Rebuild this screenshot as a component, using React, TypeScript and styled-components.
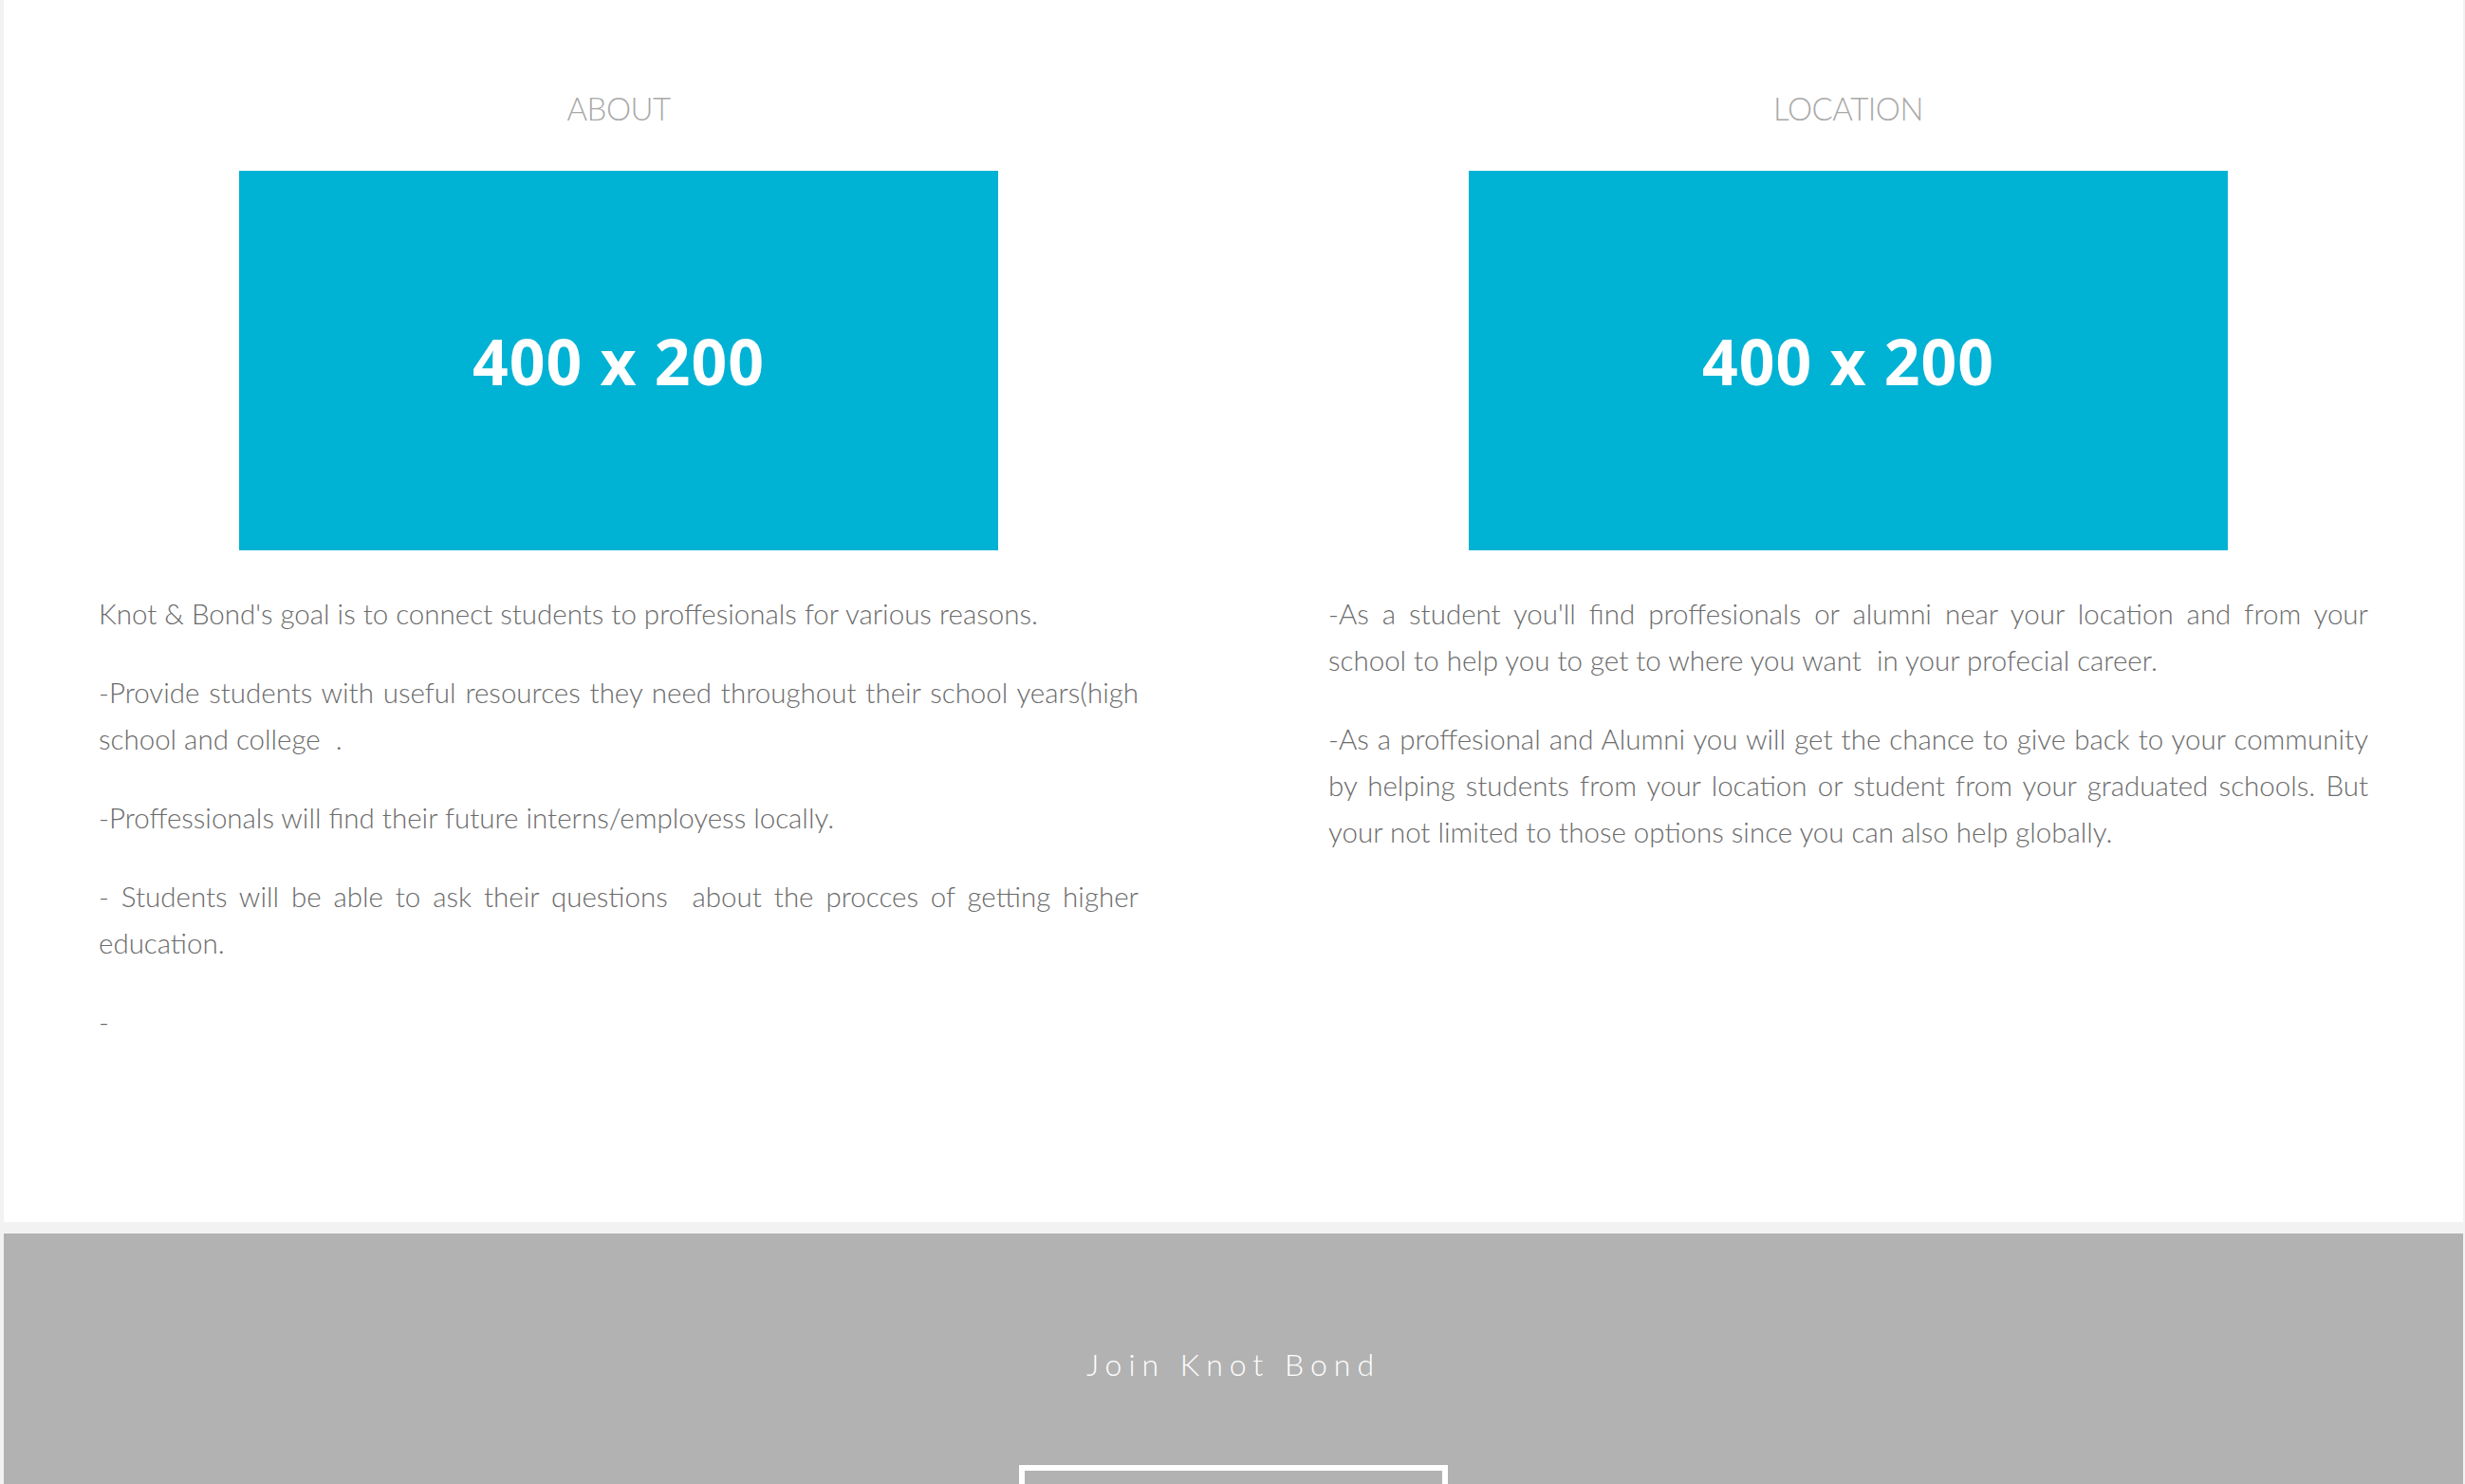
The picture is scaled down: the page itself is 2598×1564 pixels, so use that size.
import styled, { createGlobalStyle } from 'styled-components';

const GlobalStyle = createGlobalStyle`
  html, body {
    margin: 0;
    padding: 0;
    background-color: #f2f2f2; /* page shows through at the edges */
  }
  body {
    font-family: Lato, "Open Sans", "Liberation Sans", sans-serif;
  }
`;

const Page = styled.div`
  display: flex;
  flex-direction: column;
  gap: 12px;
  padding: 0 2px 0 4px;
`;

const InfoSection = styled.section`
  background-color: #ffffff;
  display: grid;
  grid-template-columns: 1fr 1fr;
  padding: 96px 0 153px;
`;

const Column = styled.div`
  display: flex;
  flex-direction: column;
  padding: 0 100px;
`;

const Heading = styled.h2`
  margin: 0 0 48px;
  font-size: 33px;
  line-height: 36px;
  font-weight: 300;
  letter-spacing: -0.5px;
  color: #a9a9a9;
  text-align: center;
`;

const Placeholder = styled.div`
  align-self: center;
  width: 800px;
  height: 400px;
  margin-bottom: 42px;
  background-color: #00b2d4;
  display: flex;
  align-items: center;
  justify-content: center;
  color: #ffffff;
  font-family: "Open Sans", Lato, sans-serif;
  font-weight: 700;
  font-size: 66px;
  letter-spacing: 1px;
`;

const Paragraph = styled.p`
  margin: 0 0 34px;
  font-size: 29.5px;
  line-height: 49px;
  font-weight: 300;
  color: #6b6b6b;
  text-align: justify;
  white-space: pre-wrap;
`;

const Footer = styled.footer`
  background-color: #b2b2b2;
  display: flex;
  flex-direction: column;
  align-items: center;
  padding: 122px 0 120px;
`;

const FooterTitle = styled.h3`
  margin: 0 0 90px;
  font-size: 32px;
  line-height: 32px;
  font-weight: 300;
  letter-spacing: 7px;
  color: #ffffff;
`;

const JoinButton = styled.a`
  display: block;
  box-sizing: border-box;
  width: 452px;
  height: 120px;
  border: 6px solid #ffffff;
`;

export default function App() {
  return (
    <>
      <GlobalStyle />
      <Page>
        <InfoSection>
          <Column>
            <Heading>ABOUT</Heading>
            <Placeholder>400 x 200</Placeholder>
            <Paragraph>Knot &amp; Bond's goal is to connect students to proffesionals for various reasons.</Paragraph>
            <Paragraph>-Provide students with useful resources they need throughout their school years(high school and college  .</Paragraph>
            <Paragraph>-Proffessionals will find their future interns/employess locally.</Paragraph>
            <Paragraph>- Students will be able to ask their questions  about the procces of getting higher education.</Paragraph>
            <Paragraph>-</Paragraph>
          </Column>
          <Column>
            <Heading>LOCATION</Heading>
            <Placeholder>400 x 200</Placeholder>
            <Paragraph>-As a student you'll find proffesionals or alumni near your location and from your school to help you to get to where you want  in your profecial career.</Paragraph>
            <Paragraph>-As a proffesional and Alumni you will get the chance to give back to your community by helping students from your location or student from your graduated schools. But your not limited to those options since you can also help globally.</Paragraph>
          </Column>
        </InfoSection>
        <Footer>
          <FooterTitle>Join Knot Bond</FooterTitle>
          <JoinButton href="#join" aria-label="Join Knot Bond" />
        </Footer>
      </Page>
    </>
  );
}
